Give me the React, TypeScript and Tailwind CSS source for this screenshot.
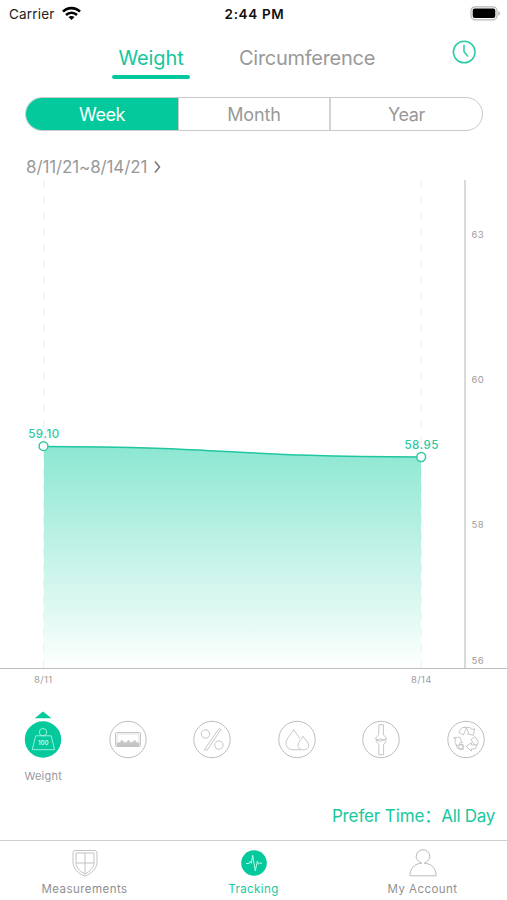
import type { ReactNode } from 'react';

const GREEN = '#04c99c';
const GREY = '#bfbfbf';

function StatusBar() {
  return (
    <div className="grid h-7 grid-cols-3 items-center pl-[9px] pr-[7px] text-[13.5px] leading-none text-[#111]">
      <div className="flex items-center gap-[7px] pt-px text-[#222]">
        <span className="tracking-[0.2px]">Carrier</span>
        <svg className="-mt-[2px]" width="19" height="15" viewBox="0 0 19 15" fill="none" stroke="#000" strokeWidth="2.6">
          <path d="M1 5.6C5.7 .9 13.3 .9 18 5.6" />
          <path d="M4 9C7.1 6 11.9 6 15 9" />
          <path d="M6.5 11 9.5 14l3-3C10.9 9.5 8.1 9.5 6.5 11Z" fill="#000" stroke="none" />
        </svg>
      </div>
      <span className="pt-px text-center font-semibold tracking-[0.65px]">2:44 PM</span>
      <svg className="-mt-[2px] mr-[-1px] justify-self-end" width="31" height="15" viewBox="0 0 31 15">
        <rect x="1" y=".8" width="26" height="13" rx="4" fill="#fff" stroke="#b5b5b5" strokeWidth="1.2" />
        <rect x="2.7" y="2.5" width="22.6" height="9.6" rx="2" />
        <path d="M28.4 5.2c2 .6 2 3.8 0 4.4Z" fill="#aaa" />
      </svg>
    </div>
  );
}

function Header() {
  return (
    <header className="grid h-[69px] grid-cols-[112px_78px_49px_136px_1fr] text-[20px] leading-none text-[#999]">
      <span />
      <div className="flex flex-col items-center pt-[20px] text-[#14c79b]">
        <span className="tracking-[-0.1px]">Weight</span>
        <span className="mt-[7px] h-[3.5px] w-[78px] rounded-full bg-[#04c99c]" />
      </div>
      <span />
      <span className="whitespace-nowrap pt-[20px] tracking-[-0.28px]">Circumference</span>
      <svg className="ml-[77px] mt-[12px]" width="24" height="24" viewBox="0 0 24 24" fill="none" stroke="#2ccba5" strokeWidth="1.5">
        <circle cx="12.2" cy="12" r="10.8" />
        <path d="M12 5.5v6.3l3.6 4.2" strokeLinecap="round" />
      </svg>
    </header>
  );
}

function Segments() {
  return (
    <div className="ml-[25px] mr-6 grid h-[34px] grid-cols-[153px_152px_1fr] overflow-hidden rounded-full border border-[#cacaca] text-[18px] leading-[33px] text-[#999]">
      <span className="border-r border-[#cacaca] bg-[#04c99c] text-center tracking-[-0.4px] text-white">Week</span>
      <span className="border-r-2 border-[#d2d2d2] text-center tracking-[-0.1px]">Month</span>
      <span className="text-center tracking-[-0.3px]">Year</span>
    </div>
  );
}

function Chart() {
  const curve = 'M44 266.5C232 266.5 232 277 421 277';
  return (
    <svg className="block" width="507" height="510" viewBox="0 0 507 510" fill="none">
      <defs>
        <linearGradient id="area" x1="0" y1="266" x2="0" y2="488" gradientUnits="userSpaceOnUse">
          <stop stopColor="#8ce7d2" />
          <stop offset="1" stopColor="#fdfffe" />
        </linearGradient>
      </defs>
      <path d="M43.8 0V488M421.2 0V488" stroke="#c8d0ce" strokeOpacity=".42" strokeDasharray="8 8" />
      <path d={`${curve}V488H44Z`} fill="url(#area)" />
      <path d="M465 0V488" stroke="#dadada" strokeWidth="2" />
      <path d="M0 488.5H507" stroke="#bdbdbd" strokeWidth="1.2" />
      <path d={curve} stroke="#20c69f" strokeWidth="1.5" />
      <g fill="#fff" stroke="#31c9a5" strokeWidth="1.5">
        <circle cx="43.5" cy="266.2" r="4.4" />
        <circle cx="421.2" cy="277" r="4.4" />
      </g>
      <g fill="#2bc9a3" fontSize="11.5" fontWeight="500" textAnchor="middle">
        <text x="44" y="258" letterSpacing=".6">59.10</text>
        <text x="421.7" y="268.7" letterSpacing=".5">58.95</text>
      </g>
      <g fill="#9c9c9c" fontSize="9.5" letterSpacing=".35">
        <text x="471.5" y="58">63</text>
        <text x="471.5" y="202.5">60</text>
        <text x="471.5" y="347.5">58</text>
        <text x="471.5" y="484.3">56</text>
        <text x="34" y="503">8/11</text>
        <text x="411" y="503">8/14</text>
      </g>
    </svg>
  );
}

const metrics: { name: string; art: ReactNode }[] = [
  {
    name: 'Weight',
    art: (
      <g stroke="#a5f5df">
        <circle cx="19" cy="11.7" r="3.7" />
        <path d="M11.7 15.3H27.2L30.5 29.2H8.2Z" />
        <text x="19.2" y="24.5" textAnchor="middle" fontSize="6" fontWeight="600" fill="#c9faed" stroke="none">100</text>
      </g>
    ),
  },
  {
    name: 'Fat',
    art: (
      <g>
        <rect x="6.5" y="12" width="25" height="14" rx=".8" />
        <path d="M8 25.5v-3l3-.6 2-2.4 1.5 2.4h3l2-2.4 1.5 2.4h3l1.5-2.4 2 2.4 2.5.6v3Z" fill="#c8c8c8" strokeWidth=".5" />
        <path d="M8 13.5h22v11H8Z" strokeWidth=".5" />
      </g>
    ),
  },
  {
    name: 'Percent',
    art: (
      <g>
        <circle cx="12.5" cy="13.5" r="4.2" />
        <circle cx="25.9" cy="24.6" r="4.2" />
        <path d="M25.5 8.7q1.4-.9 2.5.2L14.2 29.5h-3Z" />
      </g>
    ),
  },
  {
    name: 'Water',
    art: (
      <g>
        <path d="M22.5 29.2H15.2C10.6 29.2 8 26.3 8 22.6c0-4.3 4.6-8.3 7.7-13.5 2 3.5 4.4 5.9 6 9" />
        <path d="M25 15.8c2.3 3.5 5.7 6 5.7 9.3 0 2.4-2.2 4.3-5.3 4.3-3.2 0-5.5-1.8-5.5-4.4 0-3.2 3.3-5.8 5.1-9.2Z" />
      </g>
    ),
  },
  {
    name: 'Bone',
    art: (
      <g>
        <path d="M17 4.2h4.4v10.2l3 3v1.1l-3.2.8-2.2-1-2.2 1-3-.5v-1.4l2.8-3.2Z" />
        <path d="M16.8 34.2v-10l-2.6-3.3.4-1.4 3 1.5 2.4-1 3.4-.8.8 1.5-2.6 3.5v10Z" />
      </g>
    ),
  },
  {
    name: 'Metabolism',
    art: (
      <g strokeLinejoin="round">
        <path d="m11.8 11.8 2.4-3.6q1-1.6 3-1.3h5.3q1.5.2 2.4 2l2.8-.6-1.4 6.5-6-1.5 1.6-1.2-2.3-4.2" />
        <path d="m11.8 11.8 4.5 2.7 3.3-6.6-2.4-1" />
        <path d="m6.5 17.3 6.3-.7 2.4 5.8-2-.5-1.4 2.6q-1.8 1.6-2.4-.5l-1.7-2.8 1-2.6Z" />
        <path d="M8.6 23.3q1.4 5.5 4.4 5.5h3.2v-4.6h-3.8" />
        <circle cx="13.9" cy="26.3" r="2.2" />
        <path d="m24 18.8 4.2-2.7 2.6 4.6q.7 1.6-.3 3-2.3 2.1-4.2-.8Z" />
        <path d="M30.3 24 28.2 28.4h-3.8v2.2L19.2 26l5.2-3.8v2.2h4" />
      </g>
    ),
  },
];

function MetricPicker() {
  return (
    <div className="-mr-px ml-px grid h-[101px] grid-cols-6 pt-[21px]">
      {metrics.map(({ name, art }, i) => (
        <button key={name} aria-label={name} className="flex flex-col items-center">
          <svg width="38" height="48" viewBox="0 0 38 48" fill="none" strokeWidth=".9">
            {i === 0 && <path d="M10.8 7.2 19 .4l8.4 6.8Z" fill={GREEN} />}
            <g transform="translate(0 9.5)" stroke={GREY}>
              <circle cx="19" cy="19" r="18.2" fill={i === 0 ? GREEN : '#fff'} stroke={i === 0 ? GREEN : '#bdbdbd'} strokeWidth={i === 0 ? 0 : 1} />
              {art}
            </g>
          </svg>
          {i === 0 && <span className="mt-[10px] text-[11px] leading-[14px] tracking-[0.2px] text-[#999]">Weight</span>}
        </button>
      ))}
    </div>
  );
}

function BottomNav() {
  const label = 'text-[11.5px] leading-[14px] tracking-[0.45px]';
  return (
    <nav className="grid h-[60px] grid-cols-3 border-t border-[#cfcfcf] text-[#8f8f8f]">
      <div className="flex flex-col items-center gap-[5px] pt-[8px]">
        <svg width="28" height="28" viewBox="0 0 28 28" fill="none" stroke="#bbb" strokeWidth=".9">
          <path d="M4 1.5H24Q26 2 26 4V13C26 20 20 25 14 27 8 25 2 20 2 13V4Q2 2 4 1.5Z" />
          <path d="M5 4H23V14C23 19 18 23 14 25 10 23 5 19 5 14ZM14 4v21M5 14h18" />
        </svg>
        <span className={label}>Measurements</span>
      </div>
      <div className="flex flex-col items-center gap-[5px] pt-[8px] text-[#18c99d]">
        <svg width="28" height="28" viewBox="0 0 28 28" fill="none">
          <circle cx="14" cy="14" r="12.8" fill={GREEN} />
          <path d="M6 14.5h3l1.2-2 1.2 1.8 1.3-8 2.6 15.6 2-9.7 1.2 3 1.2-1H22" stroke="#c0f7e9" />
        </svg>
        <span className={label}>Tracking</span>
      </div>
      <div className="flex flex-col items-center gap-[5px] pt-[8px]">
        <svg width="28" height="28" viewBox="0 0 28 28" fill="none" stroke="#bbb">
          <path d="M12.5 13.8C9 12.7 7.2 10.4 7.2 7.5a6.8 6.8 0 0 1 13.6 0c0 2.9-1.8 5.2-5.3 6.3M13 14.2C5.5 14.4.9 19.5.9 26.8H27.1C27.1 19.5 22.5 14.4 15 14.2" />
        </svg>
        <span className={label}>My Account</span>
      </div>
    </nav>
  );
}

export default function App() {
  return (
    <main className="flex h-[900px] w-[507px] flex-col overflow-hidden bg-white font-[Inter,'Noto_Sans_CJK_SC',sans-serif]">
      <StatusBar />
      <Header />
      <Segments />
      <div className="flex h-[49px] items-center gap-[7px] pl-[26px] pt-[23px] text-[17px] leading-none text-[#999]">
        <span className="tracking-[-0.12px]">8/11/21~8/14/21</span>
        <svg width="7" height="14" viewBox="0 0 7 14" fill="none" stroke="#777" strokeWidth="1.6"><path d="m1 1.5 4.5 5.5L1 12.5" /></svg>
      </div>
      <Chart />
      <MetricPicker />
      <div className="flex h-[49px] justify-end pr-[12px] pt-[15px] text-[17px] leading-[20px] text-[#18c99d]">
        <span className="tracking-[-0.12px]">Prefer Time</span>
        <span className="w-[17px]">：</span>
        <span className="tracking-[-0.3px]">All Day</span>
      </div>
      <BottomNav />
    </main>
  );
}
